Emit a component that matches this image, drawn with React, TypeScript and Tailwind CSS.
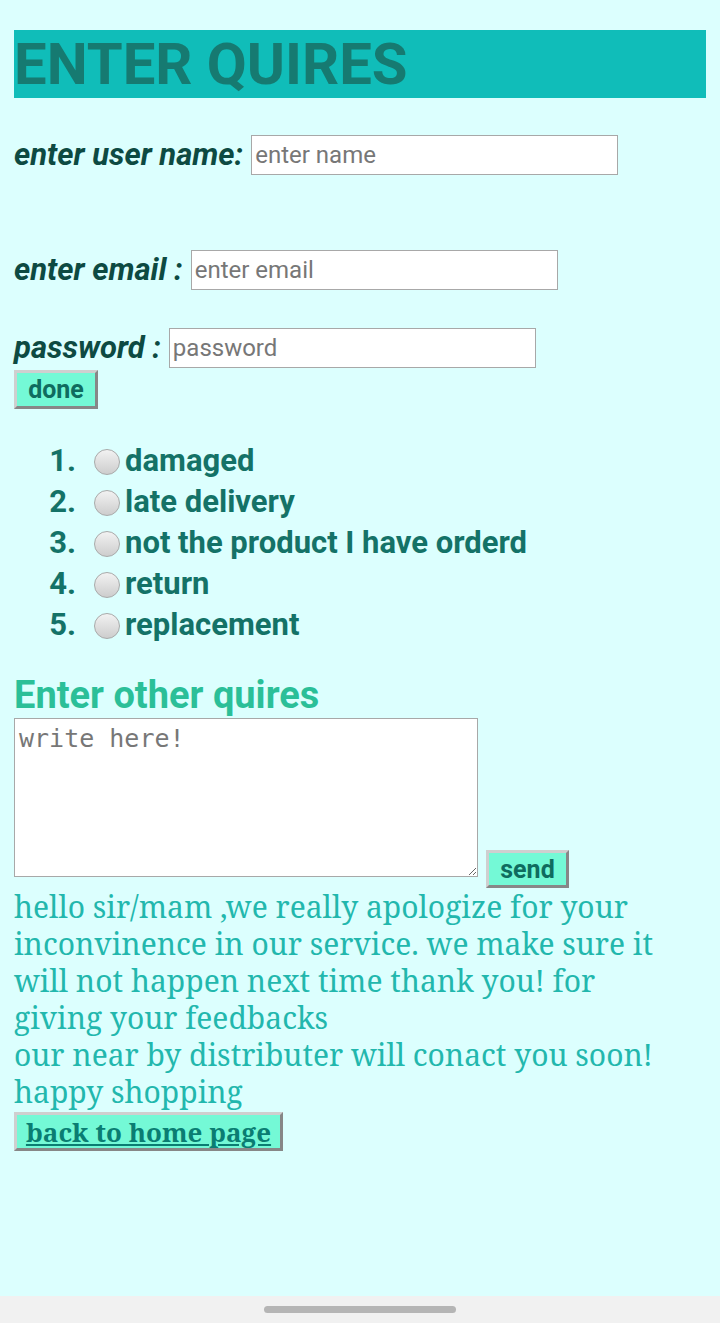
const sans = "font-['Roboto','Liberation_Sans',sans-serif]";
const serif = "font-['Noto_Serif','DejaVu_Serif',serif]";

const Radio = () => (
  <span className="inline-block w-[26px] h-[26px] rounded-full border border-[#a9a9a9] bg-gradient-to-b from-[#f2f2f2] to-[#cdcdcd] shrink-0" />
);

const Btn = ({ children, className = "" }: { children: React.ReactNode; className?: string }) => (
  <button
    className={`bg-[#74f9d6] border-[3px] border-t-[#cfcfcf] border-l-[#cfcfcf] border-b-[#878787] border-r-[#878787] font-bold whitespace-nowrap ${className}`}
  >
    {children}
  </button>
);

const reasons = ["damaged", "late delivery", "not the product I have orderd", "return", "replacement"];

export default function App() {
  return (
    <div className={`min-h-[1323px] flex flex-col bg-[#dcfffe] ${sans}`}>
      <div className="flex-1 px-[14px] pt-[30px]">
        {/* heading */}
        <h1 className="h-[68px] bg-[#10bdb9] flex items-center text-[58px] font-bold leading-none text-[#167a71]">
          ENTER QUIRES
        </h1>

        <div className="mt-[37px] flex items-center gap-[8px] h-[40px]">
          <label className="text-[31px] italic font-bold text-[#0d4a42]">enter user name:</label>
          <input
            placeholder="enter name"
            className="w-[367px] h-[40px] bg-white border border-[#a8a8a8] px-[3px] text-[24px] placeholder:text-[#777]"
          />
        </div>

        <div className="mt-[75px] flex items-center gap-[8px] h-[40px]">
          <label className="text-[31px] italic font-bold text-[#0d4a42]">enter email :</label>
          <input
            placeholder="enter email"
            className="w-[367px] h-[40px] bg-white border border-[#a8a8a8] px-[3px] text-[24px] placeholder:text-[#777]"
          />
        </div>

        <div className="mt-[38px] flex items-center gap-[8px] h-[40px]">
          <label className="text-[31px] italic font-bold text-[#0d4a42]">password :</label>
          <input
            type="password"
            placeholder="password"
            className="w-[367px] h-[40px] bg-white border border-[#a8a8a8] px-[3px] text-[24px] placeholder:text-[#777]"
          />
        </div>

        <Btn className="mt-[2px] w-[84px] h-[39px] text-[25px] leading-none text-[#0f6c5f]">done</Btn>

        <ol className="mt-[32px] text-[31px] font-bold text-[#147267]">
          {reasons.map((r, i) => (
            <li key={r} className="flex items-center h-[41px]">
              <span className="w-[62px] text-right">{i + 1}.</span>
              <span className="ml-[18px] mr-[5px] flex">
                <Radio />
              </span>
              <span>{r}</span>
            </li>
          ))}
        </ol>

        <h2 className="mt-[26px] text-[38px] font-bold leading-[46px] text-[#2bbf98]">Enter other quires</h2>

        <div className="flex items-end gap-[8px]">
          <textarea
            placeholder="write here!"
            className="w-[464px] h-[159px] bg-white border border-[#a8a8a8] px-[4px] py-[4px] resize-y text-[25px] leading-[32px] font-['DejaVu_Sans_Mono',monospace] placeholder:text-[#777]"
          />
          <Btn className="mb-[-11px] w-[83px] h-[38px] text-[25px] leading-none text-[#0f6c5f]">send</Btn>
        </div>

        <p className={`mt-[11px] text-[30px] leading-[37px] text-[#22b7ad] whitespace-nowrap ${serif}`}>
          hello sir/mam ,we really apologize for your
          <br />
          inconvinence in our service. we make sure it
          <br />
          will not happen next time thank you! for
          <br />
          giving your feedbacks
          <br />
          our near by distributer will conact you soon!
          <br />
          happy shopping
        </p>

        <Btn className={`mt-[2px] w-[269px] h-[39px] text-[26px] leading-none text-[#0a7d72] ${serif}`}>
          <span className="underline">back to home page</span>
        </Btn>
      </div>

      <div className="h-[27px] bg-[#f1f1f1] flex items-center justify-center">
        <div className="w-[192px] h-[7px] rounded-full bg-[#b5b5b5]" />
      </div>
    </div>
  );
}
